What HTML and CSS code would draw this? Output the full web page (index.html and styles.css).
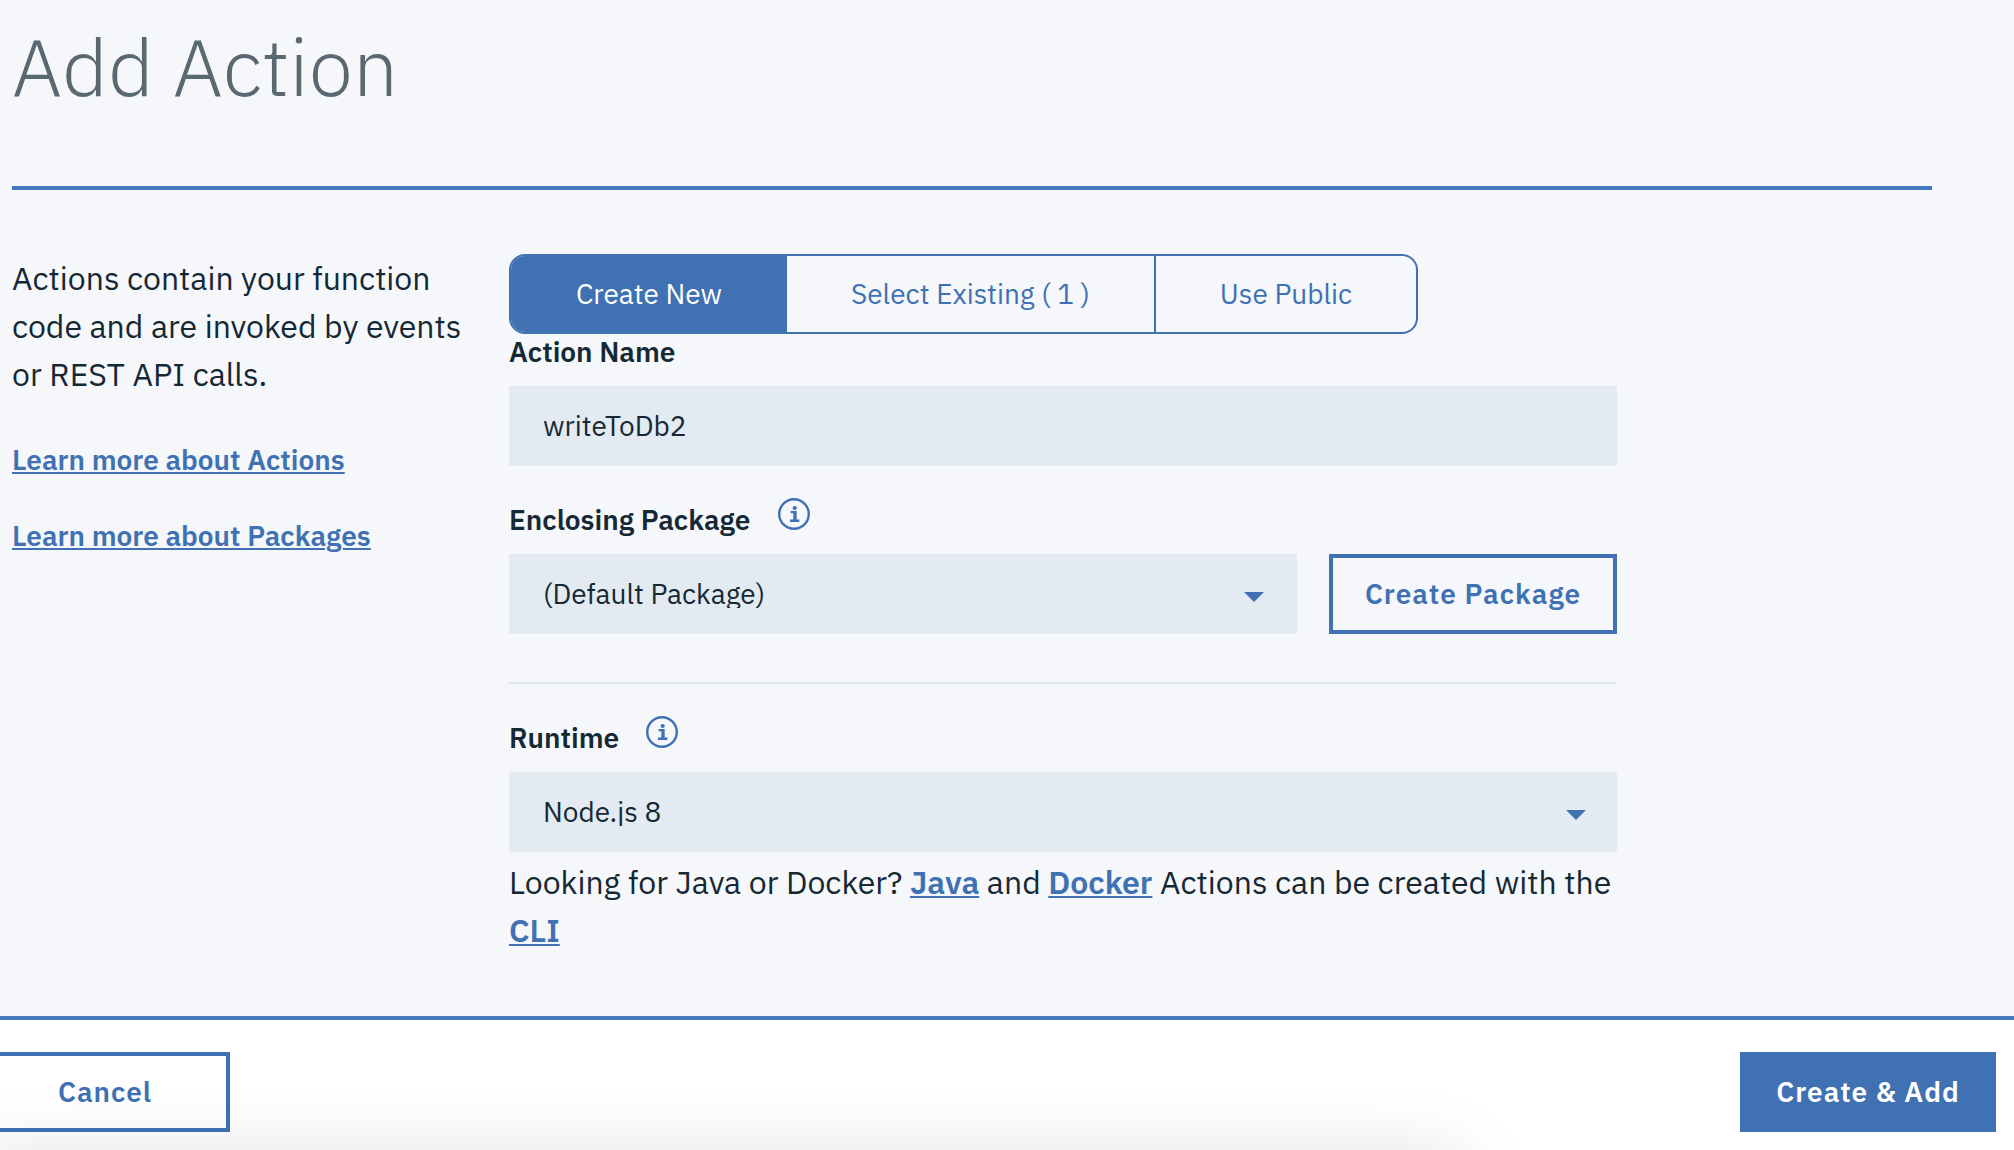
FILE: index.html
```html
<!DOCTYPE html>
<html lang="en">
<head>
<meta charset="utf-8">
<title>Add Action</title>
<link rel="stylesheet" href="styles.css">
</head>
<body>
<div class="page">
  <header class="header"><h1 class="title">Add Action</h1></header>
  <main class="content">
    <aside class="intro">
      <p class="intro-text">Actions contain your function<br>code and are invoked by events<br>or REST API calls.</p>
      <a class="link more" href="#">Learn more about Actions</a>
      <a class="link more" href="#">Learn more about Packages</a>
    </aside>
    <section class="form">
      <nav class="tabs">
        <button class="tab tab-new active">Create New</button>
        <button class="tab tab-existing">Select Existing ( 1 )</button>
        <button class="tab tab-public">Use Public</button>
      </nav>
      <div class="label">Action Name</div>
      <div class="field"><span class="value">writeToDb2</span></div>

      <div class="label spaced">
        <span>Enclosing Package</span>
        <svg class="info" viewBox="0 0 32 32"><circle class="ring" cx="16" cy="16" r="14.8"/><path d="M12.6 13h6.1v8.5h2.6V24H12v-2.500h3.300v-6.200h-2.700z"/><circle cx="16.700" cy="10" r="2.100"/></svg>
      </div>
      <div class="row">
        <div class="field select"><span class="value clipped">(Default Package)</span><svg class="arrow" viewBox="0 0 20 10"><path d="M0 0h20L10 10z"/></svg></div>
        <button class="button create-package">Create Package</button>
      </div>
      <hr class="divider">
      <div class="label">
        <span>Runtime</span>
        <svg class="info" viewBox="0 0 32 32"><circle class="ring" cx="16" cy="16" r="14.8"/><path d="M12.6 13h6.1v8.5h2.6V24H12v-2.500h3.300v-6.200h-2.700z"/><circle cx="16.700" cy="10" r="2.100"/></svg>
      </div>
      <div class="field select"><span class="value clipped">Node.js 8</span><svg class="arrow" viewBox="0 0 20 10"><path d="M0 0h20L10 10z"/></svg></div>
      <p class="hint">Looking for Java or Docker? <a class="link" href="#">Java</a> and <a class="link" href="#">Docker</a> Actions can be created with the <a class="link" href="#">CLI</a></p>
    </section>
  </main>
  <footer class="footer">
    <button class="button cancel">Cancel</button>
    <button class="button primary">Create &amp; Add</button>
    <div class="shade"></div>
  </footer>
</div>
</body>
</html>
```
FILE: styles.css
```css
* { box-sizing: border-box; }
body {
  margin: 0;
  background: #f5f7fb;
  color: #152935;
  font: 400 32px/48px "IBM Plex Sans", Roboto, sans-serif;
}
button {
  margin: 0;
  padding: 0 0 1px;
  border: 0;
  background: none;
  font: inherit;
  line-height: 39px;
  color: #4071b2;
  white-space: nowrap;
}
p, h1 { margin: 0; }
.page {
  height: 1150px;
  display: flex;
  flex-direction: column;
  overflow: hidden;
}
.header {
  width: 1920px;
  height: 190px;
  margin-left: 12px;
  padding-top: 18px;
  border-bottom: 4px solid #447abd;
}
.title {
  color: #5a6872;
  font-weight: 300;
  font-size: 80px;
  line-height: 96px;
}
.content { flex: 1; display: flex; padding: 64px 0 0 12px; }
.intro { width: 497px; }
.intro-text { white-space: nowrap; }
.link {
  color: #4071b2;
  font-weight: 600;
  text-decoration-thickness: 2px;
  text-underline-offset: 2px;
}
.more {
  display: block;
  width: max-content;
  margin-top: 35px;
  font-size: 28px;
  line-height: 41px;
}
.intro-text + .more { margin-top: 41px; }
.form { width: 1108px; font-size: 28px; }
.tabs {
  width: 909px;
  height: 80px;
  display: flex;
  border: 2px solid #4071b2;
  border-radius: 16px;
  overflow: hidden;
}
.tab-new { width: 276px; }
.tab-existing { width: 369px; border-right: 2px solid #4071b2; }
.tab-public { flex: 1; }
.active { background: #4071b2; color: #fff; }
.label {
  display: flex;
  gap: 27.3px;
  height: 52px;
  font-weight: 600;
  line-height: 35px;
}
.spaced { margin-top: 36px; }
.info { width: 32px; height: 32px; margin-top: -4px; fill: #4071b2; }
.ring { fill: none; stroke: #4071b2; stroke-width: 2.4; }
.field {
  height: 80px;
  padding: 0 31px 0 34px;
  display: flex;
  align-items: center;
  background: #e3eaf2;
}
.value { height: 40px; line-height: 39px; }
.clipped { height: 28px; line-height: 27px; overflow: hidden; }
.arrow { width: 20px; height: 10px; margin: 6px 0 0 auto; fill: #4071b2; }
.row { display: flex; gap: 32px; }
.row .select { flex: 1; padding-right: 33px; }
.button { height: 80px; font-weight: 600; letter-spacing: 1px; }
.create-package { width: 288px; border: 4px solid #4071b2; }
.divider { height: 2px; margin: 48px 0 36px; border: 0; background: #dfe6ec; }
.hint { padding-top: 6px; font-size: 32px; }
.footer {
  position: relative;
  height: 134px;
  padding: 32px 18px 0 0;
  display: flex;
  justify-content: space-between;
  border-top: 4px solid #447abd;
  background: #fff;
  font-size: 28px;
}
.cancel { width: 250px; margin-left: -20px; border: 4px solid #4071b2; }
.primary { width: 256px; background: #4071b2; color: #fff; }
/* Soft shadow rising from below the fold */
.shade {
  position: absolute;
  left: -18px;
  top: 142px;
  width: 1478px;
  height: 120px;
  border-radius: 12px;
  box-shadow: 0 0 80px rgba(0, 0, 0, .15);
}
```
